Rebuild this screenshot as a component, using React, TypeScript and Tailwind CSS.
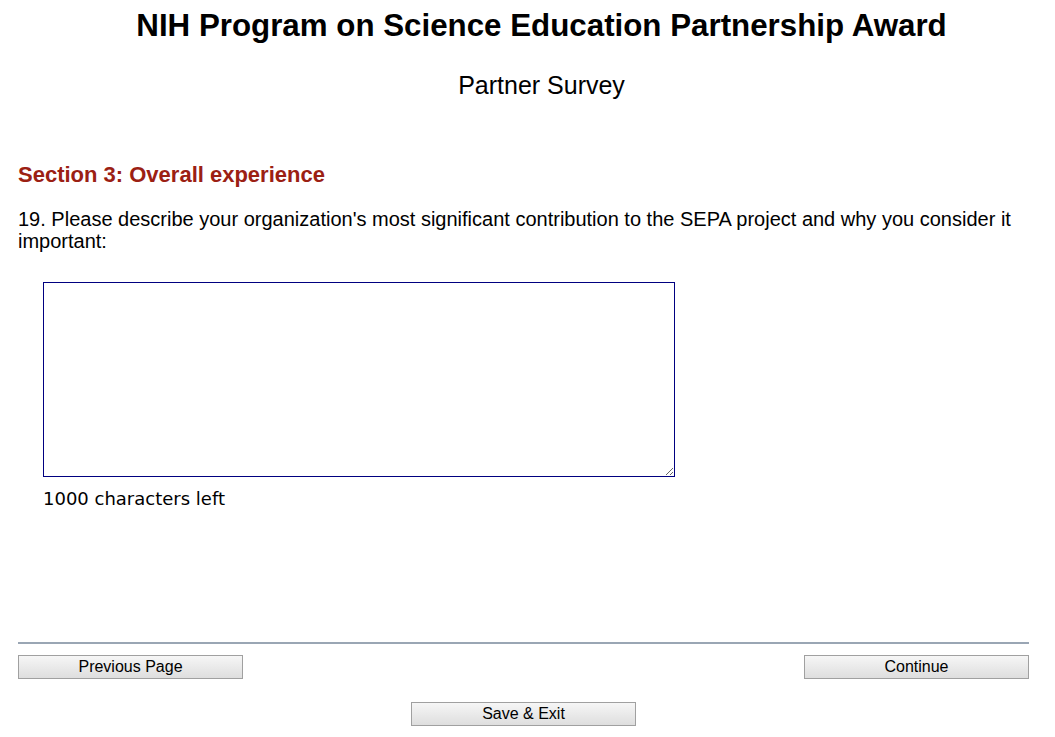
export default function App() {
  return (
    <div className="min-h-screen bg-white pl-[18px] pr-[26px] text-black font-['Liberation_Sans',Arial,sans-serif]">
      {/* Header */}
      <header className="pl-[36px] pt-[8px] text-center">
        <h1 className="text-[31.3px] font-bold leading-[36px]">
          NIH Program on Science Education Partnership Award
        </h1>
        <h2 className="mt-[26px] text-[25px] leading-[30px]">Partner Survey</h2>
      </header>

      {/* Section */}
      <h3 className="mt-[62px] text-[22px] font-bold leading-[26px] text-[#9b2013]">
        Section 3: Overall experience
      </h3>
      <p className="mt-[20px] text-[20px] leading-[22px]">
        19. Please describe your organization's most significant contribution to the SEPA project and why you consider it
        important:
      </p>

      <div className="mt-[30px] pl-[25px]">
        <textarea className="block h-[195px] w-[632px] resize border border-[#000080] bg-white p-1 outline-none" />
        <div className="mt-[11px] font-['DejaVu_Sans',Verdana,sans-serif] text-[18px] leading-[22px]">
          1000 characters left
        </div>
      </div>

      {/* Footer */}
      <div className="mt-[132px] border-t-2 border-[#9aa6b4]" />
      <div className="mt-[11px] flex justify-between">
        <button className="h-[24px] w-[225px] border border-[#a0a0a0] bg-gradient-to-b from-[#f6f6f6] to-[#dedede] text-[16px] leading-[22px]">
          Previous Page
        </button>
        <button className="h-[24px] w-[225px] border border-[#a0a0a0] bg-gradient-to-b from-[#f6f6f6] to-[#dedede] text-[16px] leading-[22px]">
          Continue
        </button>
      </div>
      <div className="mt-[23px] flex justify-center">
        <button className="h-[24px] w-[225px] border border-[#a0a0a0] bg-gradient-to-b from-[#f6f6f6] to-[#dedede] text-[16px] leading-[22px]">
          Save &amp; Exit
        </button>
      </div>
    </div>
  )
}
